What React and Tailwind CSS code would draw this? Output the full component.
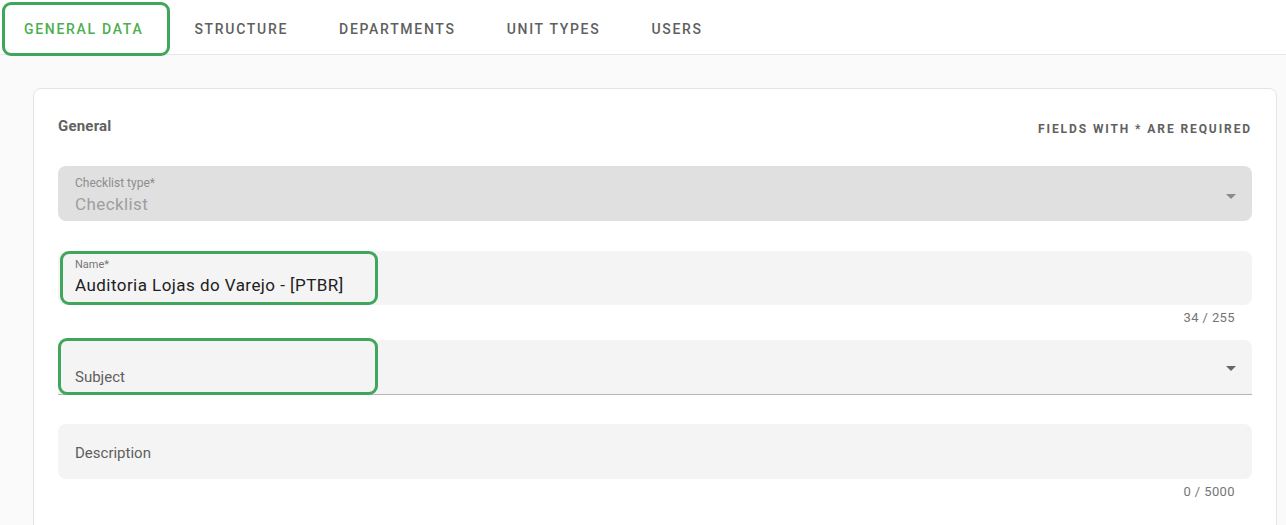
import { useState } from "react";

const tabs = ["GENERAL DATA", "STRUCTURE", "DEPARTMENTS", "UNIT TYPES", "USERS"];

const Arrow = ({ className }) => (
  <svg width="10" height="5" viewBox="0 0 10 5" className={className}>
    <path d="M0 0 L10 0 L5 5 Z" fill="currentColor" />
  </svg>
);

// green highlight frame drawn over a field
const Mark = ({ className }) => (
  <div className={"pointer-events-none absolute rounded-[9px] border-[3px] border-[#3fa65c] " + className} />
);

const App = () => {
  const [active, setActive] = useState(0);

  return (
    <div className="h-[525px] overflow-hidden bg-[#fafafa] font-['Roboto',sans-serif] text-[#616161]">
      <div className="h-[55px] bg-white border-b border-[#e6e6e6] flex items-stretch">
        {tabs.map((tab, i) => (
          <button
            key={tab}
            onClick={() => setActive(i)}
            className={
              "relative pl-[24px] pr-[22px] mr-[5px] pt-[5px] text-[14px] font-medium tracking-[1.7px] " +
              (i === active ? "text-[#4caf50]" : "text-[#5f5f5f]")
            }
          >
            {tab}
            {i === 0 && <Mark className="left-[2px] top-[2px] w-[168px] h-[54px]" />}
          </button>
        ))}
      </div>

      <div className="pt-[33px] pl-[33px] pr-[9px]">
        <div className="bg-white border border-[#e4e4e4] rounded-lg px-6 pt-[25px] pb-6 min-h-[480px]">
          <div className="flex justify-between items-center h-6">
            <h2 className="text-[15px] font-bold text-[#616161] tracking-[0.2px]">General</h2>
            <span className="text-[12px] font-bold tracking-[1.9px] text-[#616161] mt-[5px]">
              FIELDS WITH * ARE REQUIRED
            </span>
          </div>

          {/* checklist type - disabled */}
          <div className="mt-[28px] h-[55px] bg-[#e0e0e0] rounded-lg pl-[17px] pr-4 flex items-center">
            <div className="flex-1 pt-[2px]">
              <div className="text-[12px] leading-[14px] text-[#8e8e8e]">Checklist type*</div>
              <div className="text-[17px] leading-[20px] mt-[4px] text-[#9e9e9e] tracking-[0.4px]">Checklist</div>
            </div>
            <Arrow className="text-[#8a8a8a] mt-[6px]" />
          </div>

          {/* name */}
          <div className="relative mt-[30px] h-[54px] bg-[#f4f4f4] rounded-lg pl-[17px] pt-[7px]">
            <div className="text-[11px] leading-[13px] text-[#757575]">Name*</div>
            <div className="text-[17px] leading-[20px] mt-[4px] text-[#212121] tracking-[0.45px]">
              Auditoria Lojas do Varejo - [PTBR]
            </div>
            <Mark className="left-[2px] top-0 w-[318px] h-[54px]" />
          </div>
          <div className="h-[35px] pt-[6px] pr-[17px] text-right text-[13px] leading-[14px] text-[#757575] tracking-[0.4px]">
            34 / 255
          </div>

          {/* subject */}
          <div className="relative h-[55px] bg-[#f4f4f4] rounded-t-lg border-b border-[#b5b5b5] pl-[17px] pr-4 flex items-center">
            <div className="flex-1 text-[15px] leading-[18px] text-[#5f5f5f] mt-[20px]">Subject</div>
            <Arrow className="text-[#666] mt-[3px]" />
            <Mark className="left-0 top-[-2px] w-[320px] h-[57px]" />
          </div>

          {/* description */}
          <div className="mt-[29px] h-[55px] bg-[#f4f4f4] rounded-lg pl-[17px] flex items-center">
            <div className="text-[15px] text-[#5f5f5f] mt-[4px]">Description</div>
          </div>
          <div className="pt-[6px] pr-[17px] text-right text-[13px] leading-[14px] text-[#757575] tracking-[0.4px]">
            0 / 5000
          </div>
        </div>
      </div>
    </div>
  );
};

export default App;
